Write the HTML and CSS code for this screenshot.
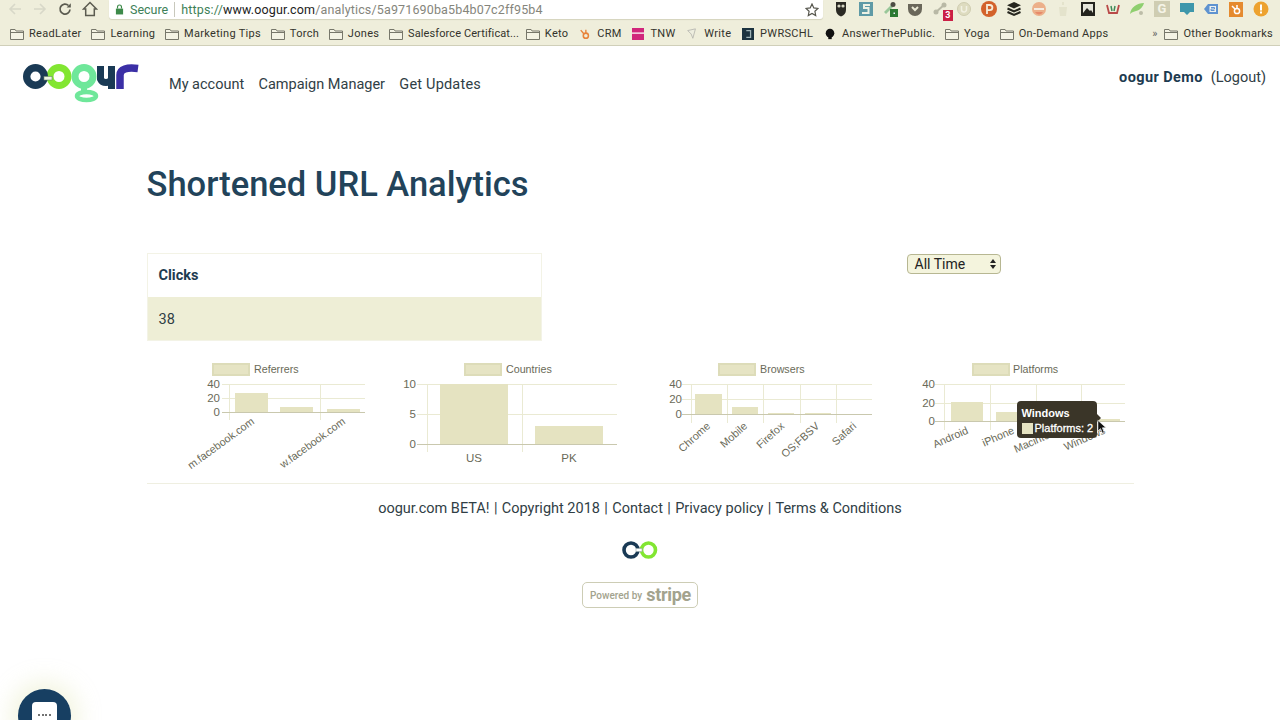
FILE: index.html
```html
<!DOCTYPE html>
<html lang="en">
<head>
<meta charset="utf-8">
<title>Shortened URL Analytics</title>
<link rel="stylesheet" href="styles.css">
</head>
<body>
<svg class="defs" width="0" height="0" aria-hidden="true">
  <defs>
    <symbol id="folder" viewBox="0 0 14 12">
      <path d="M.5 11.5V1.5h4.600l1 1.500h7.400v8.500z" fill="#f4f3e4" stroke="#77776a"/>
      <path d="M.5 4.500h13" stroke="#77776a" fill="none"/>
    </symbol>
  </defs>
</svg>

<header class="chrome">
  <div class="toolbar">
    <div class="nav-icons">
      <svg class="nav-icon" viewBox="0 0 16 16"><path d="M14 8H3M8 3 3 8l5 5" fill="none" stroke="#d8d8c8" stroke-width="1.600"/></svg>
      <svg class="nav-icon" viewBox="0 0 16 16"><path d="M2 8h11M8 3l5 5-5 5" fill="none" stroke="#d8d8c8" stroke-width="1.600"/></svg>
      <svg class="nav-icon" viewBox="0 0 16 16"><path d="M13 8.500A5 5 0 1 1 11.500 4.500" fill="none" stroke="#5b5b50" stroke-width="1.700"/><path d="M9.600 6.400h4.200V2.200z" fill="#5b5b50"/></svg>
      <svg class="nav-icon" viewBox="0 0 16 16"><path d="M8 1.500 1.500 8h2.200v6.500h8.600V8h2.200z" fill="none" stroke="#5b5b50" stroke-width="1.500"/></svg>
    </div>
    <div class="omnibox">
      <svg class="lock" viewBox="0 0 10 12"><path d="M1 5h8v6.500H1z" fill="#3d8a4a"/><path d="M2.800 5V3.200a2.200 2.200 0 0 1 4.400 0V5" fill="none" stroke="#3d8a4a" stroke-width="1.300"/></svg>
      <span class="secure">Secure</span>
      <span class="url"><span class="url-scheme">https://</span><span class="url-host">www.oogur.com</span><span class="url-path">/analytics/5a971690ba5b4b07c2ff95b4</span></span>
      <svg class="star" viewBox="0 0 14 14"><path d="m7 1 1.800 3.900 4.200.5-3.100 2.900.8 4.200L7 10.400l-3.700 2.100.8-4.200L1 5.400l4.200-.5z" fill="none" stroke="#55554c" stroke-width="1.200"/></svg>
    </div>
    <div class="extensions">
      <svg class="ext" viewBox="0 0 16 16"><path d="M3 1h10v8c0 3-2 5.500-5 6.500C5 14.500 3 12 3 9z" fill="#2b2a24"/><circle cx="6" cy="5" r="1.600" fill="#d8d8c4"/><circle cx="10" cy="5" r="1.600" fill="#d8d8c4"/></svg>
      <svg class="ext" viewBox="0 0 16 16"><rect x="1" y="1" width="14" height="14" fill="#5f9aa6"/><path d="M12 4H6v3h4.500v5H4" fill="none" stroke="#eef1e4" stroke-width="2"/></svg>
      <svg class="ext" viewBox="0 0 16 16"><path d="m2 11 7-7 2 2-7 7z" fill="#9ac79a"/><circle cx="11" cy="3.500" r="2.500" fill="#4d4d44"/><rect x="8" y="8" width="8" height="8" fill="#2c7a33"/><rect x="11.500" y="11.500" width="1.500" height="1.500" fill="#eef"/></svg>
      <svg class="ext" viewBox="0 0 16 16"><path d="M1 3h14v5a7 7 0 0 1-14 0z" fill="#6a675a"/><path d="m5 6 3 3 3-3" fill="none" stroke="#ecebd6" stroke-width="2"/></svg>
      <span class="ext ext-badged">
        <svg class="ext" viewBox="0 0 16 16"><circle cx="4" cy="11" r="2.500" fill="#b9b9a6"/><circle cx="12" cy="4" r="2.500" fill="#b9b9a6"/><path d="m4 11 8-7" stroke="#b9b9a6" stroke-width="2"/></svg>
        <span class="badge">3</span>
      </span>
      <svg class="ext" viewBox="0 0 16 16"><circle cx="8" cy="8" r="6.500" fill="#dedcc0" stroke="#cfcdb0"/><path d="M5.500 5v3.500a2.500 2.500 0 0 0 5 0V5" fill="none" stroke="#f2f1e2" stroke-width="1.500"/></svg>
      <svg class="ext" viewBox="0 0 16 16"><circle cx="8" cy="8" r="8" fill="#d3622b"/><path d="M6 13V4h2.800a2.500 2.500 0 0 1 0 5.200H6" fill="none" stroke="#f6ecd8" stroke-width="1.800"/></svg>
      <svg class="ext" viewBox="0 0 16 16"><path d="m8 1 7 3.200L8 7.400 1 4.200z" fill="#26261f"/><path d="m1.500 7.500 6.500 3 6.500-3M1.500 11l6.500 3 6.500-3" fill="none" stroke="#26261f" stroke-width="2"/></svg>
      <svg class="ext" viewBox="0 0 16 16"><circle cx="8" cy="8" r="7" fill="#ecb08a"/><rect x="3" y="7" width="10" height="2" fill="#f5ece0"/><path d="M4 11a4.500 4.500 0 0 0 8 0z" fill="#e78a6a"/></svg>
      <svg class="ext" viewBox="0 0 16 16"><path d="M4 6h8l-1 9H5zM7 1h2v3H7z" fill="#e4e3cc"/></svg>
      <svg class="ext" viewBox="0 0 16 16"><rect x="1" y="1" width="14" height="14" fill="#24241e"/><rect x="3" y="3" width="10" height="9" fill="#e6e6da"/><path d="m3 12 4-5 3 3 1-1 2 3z" fill="#24241e"/></svg>
      <svg class="ext" viewBox="0 0 16 16"><path d="m2 4 2 8h8l2-8" fill="none" stroke="#b94a48" stroke-width="1.800"/><path d="m6 5 1 5M10 5 9 10" stroke="#3f8a58" stroke-width="1.500"/></svg>
      <svg class="ext" viewBox="0 0 16 16"><path d="M1 13C2 6 8 2 15 2c-1 3-3 7-8 8-2 .5-4 1-6 3z" fill="#8fcf6f"/><circle cx="12" cy="12" r="2" fill="#bdbda8"/></svg>
      <span class="ext ext-g">G</span>
      <svg class="ext" viewBox="0 0 16 16"><path d="M1 2h14v9h-4l-3 3-3-3H1z" fill="#3e97ab"/></svg>
      <svg class="ext" viewBox="0 0 16 16"><path d="M1 8 5 3h10v10H5z" fill="#5f93d0"/><rect x="6.500" y="5" width="6.500" height="6" fill="#eef1ee"/><path d="M8 6.500h3.500v1.500H8v1.500h3.500" fill="none" stroke="#5f93d0"/></svg>
      <svg class="ext" viewBox="0 0 16 16"><rect x="1" y="1" width="14" height="15" fill="#e58a2e"/><circle cx="9" cy="10" r="2.600" fill="none" stroke="#fff" stroke-width="1.500"/><path d="M9 7.500V4M7 8 4 5" stroke="#fff" stroke-width="1.500"/></svg>
      <svg class="ext" viewBox="0 0 16 16"><circle cx="8" cy="8" r="7.500" fill="#eda22f"/><rect x="7" y="3.500" width="2" height="6" fill="#fff"/><rect x="7" y="10.500" width="2" height="2" fill="#fff"/></svg>
    </div>
  </div>

  <nav class="bookmarks">
    <a class="bm"><svg class="bm-icon"><use href="#folder"/></svg>ReadLater</a>
    <a class="bm"><svg class="bm-icon"><use href="#folder"/></svg>Learning</a>
    <a class="bm"><svg class="bm-icon"><use href="#folder"/></svg>Marketing Tips</a>
    <a class="bm"><svg class="bm-icon"><use href="#folder"/></svg>Torch</a>
    <a class="bm"><svg class="bm-icon"><use href="#folder"/></svg>Jones</a>
    <a class="bm bm-long"><svg class="bm-icon"><use href="#folder"/></svg>Salesforce Certificat...</a>
    <a class="bm"><svg class="bm-icon"><use href="#folder"/></svg>Keto</a>
    <a class="bm"><svg class="bm-icon" viewBox="0 0 14 14"><circle cx="8" cy="9" r="3" fill="none" stroke="#e8833a" stroke-width="1.800"/><path d="M8 6V2M5.800 7 2 2.500" stroke="#e8833a" stroke-width="1.600"/></svg>CRM</a>
    <a class="bm"><svg class="bm-icon" viewBox="0 0 14 14"><rect width="14" height="14" fill="#d1267c"/><path d="M0 6h14" stroke="#f3c6dc" stroke-width="2"/></svg>TNW</a>
    <a class="bm"><svg class="bm-icon" viewBox="0 0 14 14"><path d="m2 3 9-2-3 11-2-5z" fill="#eeeedf" stroke="#b5b5ae"/></svg>Write</a>
    <a class="bm"><svg class="bm-icon" viewBox="0 0 14 14"><rect width="14" height="14" fill="#1c3340"/><path d="M5 3h5v8H5" fill="none" stroke="#9fb4b8" stroke-width="1.500"/></svg>PWRSCHL</a>
    <a class="bm"><svg class="bm-icon" viewBox="0 0 14 14"><circle cx="7" cy="6" r="5" fill="#111"/><rect x="5" y="10" width="4" height="3" fill="#111"/></svg>AnswerThePublic.</a>
    <a class="bm"><svg class="bm-icon"><use href="#folder"/></svg>Yoga</a>
    <a class="bm"><svg class="bm-icon"><use href="#folder"/></svg>On-Demand Apps</a>
    <span class="bm-more">»</span>
    <a class="bm"><svg class="bm-icon"><use href="#folder"/></svg>Other Bookmarks</a>
  </nav>
</header>

<div class="site-header">
  <svg class="logo" viewBox="23 62 116 42" role="img" aria-label="oogur">
    <circle cx="59" cy="76.500" r="9" fill="none" stroke="#82e632" stroke-width="7"/>
    <circle cx="35.500" cy="76.500" r="8.800" fill="none" stroke="#1a3a55" stroke-width="7.400"/>
    <rect x="44" y="76.500" width="8" height="3.500" fill="#eef6e4" stroke="#6d8a70" stroke-width=".6"/>
    <circle cx="84" cy="76.500" r="9" fill="none" stroke="#6fe79a" stroke-width="7"/>
    <ellipse cx="86.500" cy="96" rx="9.500" ry="4" fill="none" stroke="#6fe79a" stroke-width="4.500"/>
    <path d="M84 86v5" stroke="#6fe79a" stroke-width="6"/>
    <path d="M100.500 66v13a6 6 0 0 0 11 0V66" fill="none" stroke="#1a3a55" stroke-width="7"/>
    <path d="M111.500 66v23" stroke="#1a3a55" stroke-width="7"/>
    <path d="M120 89V75c0-6 7-8 18-6.500" fill="none" stroke="#3b2fa6" stroke-width="7.500"/>
  </svg>
  <nav class="site-nav">
    <a>My account</a>
    <a>Campaign Manager</a>
    <a class="nav-last">Get Updates</a>
  </nav>
  <div class="user"><strong>oogur Demo</strong><span>(Logout)</span></div>
</div>

<main class="content">
  <h1>Shortened URL Analytics</h1>
  <div class="summary">
    <table class="clicks">
      <thead><tr><th>Clicks</th></tr></thead>
      <tbody><tr><td>38</td></tr></tbody>
    </table>
    <div class="range">
      <span>All Time</span>
      <svg class="range-arrows" viewBox="0 0 8 12"><path d="M4 1 7 5H1zM4 11 1 7h6z" fill="#222"/></svg>
    </div>
  </div>

  <div class="charts">
    <figure class="chart">
      <svg viewBox="128 360 253 116" width="253" height="116">
        <rect class="swatch" x="213" y="364" width="36" height="11"/>
        <text class="lbl" x="254" y="373">Referrers</text>
        <g class="grid"><path d="M222 384.500h143M222 398.500h143M229.500 384v36M320.500 384v36"/></g>
        <path class="axis" d="M222 412.500h143"/>
        <g class="bars"><rect x="235" y="393" width="33" height="19"/><rect x="280" y="407" width="33" height="5"/><rect x="327" y="409" width="33" height="3"/></g>
        <text class="tick end" x="220" y="388">40</text><text class="tick end" x="220" y="402">20</text><text class="tick end" x="220" y="416">0</text>
        <text class="tick rot end" transform="translate(255 423) rotate(-36)">m.facebook.com</text>
        <text class="tick rot end" transform="translate(346 423) rotate(-36)">w.facebook.com</text>
      </svg>
    </figure>
    <figure class="chart">
      <svg viewBox="381 360 253 116" width="253" height="116">
        <rect class="swatch" x="465" y="364" width="36" height="11"/>
        <text class="lbl" x="506" y="373">Countries</text>
        <g class="grid"><path d="M417 384.500h200M417 414.500h200M427.500 384v68M522.500 384v68"/></g>
        <path class="axis" d="M417 444.500h200"/>
        <g class="bars"><rect x="440" y="384" width="68" height="60"/><rect x="535" y="426" width="68" height="18"/></g>
        <text class="tick end" x="416" y="388">10</text><text class="tick end" x="416" y="418">5</text><text class="tick end" x="416" y="448">0</text>
        <text class="tick mid" x="474" y="462">US</text><text class="tick mid" x="569" y="462">PK</text>
      </svg>
    </figure>
    <figure class="chart">
      <svg viewBox="634 360 253 116" width="253" height="116">
        <rect class="swatch" x="719" y="364" width="36" height="11"/>
        <text class="lbl" x="760" y="373">Browsers</text>
        <g class="grid"><path d="M682 384.500h190M682 399.500h190M691.500 384v39M727.500 384v39M763.500 384v39M800.500 384v39M836.500 384v39"/></g>
        <path class="axis" d="M682 414.500h190"/>
        <g class="bars"><rect x="695" y="394" width="27" height="20"/><rect x="732" y="407" width="26" height="7"/><rect x="768" y="413" width="26" height="1"/><rect x="805" y="413" width="26" height="1"/></g>
        <text class="tick end" x="682" y="388">40</text><text class="tick end" x="682" y="403">20</text><text class="tick end" x="682" y="418">0</text>
        <text class="tick rot end" transform="translate(711 427) rotate(-42)">Chrome</text>
        <text class="tick rot end" transform="translate(748 427) rotate(-42)">Mobile</text>
        <text class="tick rot end" transform="translate(785 427) rotate(-42)">Firefox</text>
        <text class="tick rot end" transform="translate(820 427) rotate(-42)">OS;FBSV</text>
        <text class="tick rot end" transform="translate(857 427) rotate(-42)">Safari</text>
      </svg>
    </figure>
    <figure class="chart">
      <svg viewBox="887 360 253 116" width="253" height="116">
        <rect class="swatch" x="973" y="364" width="36" height="11"/>
        <text class="lbl" x="1013" y="373">Platforms</text>
        <g class="grid"><path d="M935 384.500h190M935 403.500h190M944.500 384v46M990.500 384v46M1036.500 384v46M1081.500 384v46"/></g>
        <path class="axis" d="M935 421.500h190"/>
        <g class="bars"><rect x="951" y="402" width="32" height="19"/><rect x="996" y="412" width="32" height="9"/><rect x="1087" y="419" width="33" height="2"/></g>
        <text class="tick end" x="935" y="388">40</text><text class="tick end" x="935" y="407">20</text><text class="tick end" x="935" y="425">0</text>
        <text class="tick rot end" transform="translate(969 433) rotate(-24)">Android</text>
        <text class="tick rot end" transform="translate(1015 433) rotate(-24)">iPhone</text>
        <text class="tick rot end" transform="translate(1061 433) rotate(-24)">Macintosh</text>
        <text class="tick rot end" transform="translate(1106 433) rotate(-24)">Windows</text>
      </svg>
      <div class="tooltip">
        <div class="tooltip-title">Windows</div>
        <div class="tooltip-row"><i class="tooltip-swatch"></i>Platforms: 2</div>
      </div>
      <svg class="cursor" viewBox="0 0 12 18"><path d="M1 1v13l3.200-3 2.300 5.500 2.200-1L6.500 10H11z" fill="#111" stroke="#fff" stroke-width=".8"/></svg>
    </figure>
  </div>

  <footer class="footer">
    <p class="footer-links">oogur.com BETA! <span class="sep">|</span> Copyright 2018 <span class="sep">|</span> Contact <span class="sep">|</span> Privacy policy <span class="sep">|</span> Terms &amp; Conditions</p>
    <svg class="mini-logo" viewBox="0 0 36 18" role="img" aria-label="oogur">
      <circle cx="26.500" cy="9" r="7" fill="none" stroke="#82e632" stroke-width="3.600"/>
      <circle cx="9" cy="9" r="7" fill="none" stroke="#1a3a55" stroke-width="3.600"/>
      <rect x="14" y="7.500" width="6" height="3" fill="#fff" stroke="#9aa" stroke-width=".6"/>
    </svg>
    <div class="stripe"><span class="stripe-pre">Powered by</span><span class="stripe-name">stripe</span></div>
  </footer>
</main>

<div class="chat"><div class="chat-bubble"><i></i><i></i><i></i><i></i></div></div>
</body>
</html>
```

FILE: styles.css
```css
* { box-sizing: border-box; }
html, body { height: 100%; }
body {
  margin: 0;
  background: #fff;
  color: #303e45;
  font-family: Roboto, "Liberation Sans", sans-serif;
  font-size: 14.5px;
  overflow: hidden;
  position: relative;
}
.defs { position: absolute; }

/* browser chrome */
.chrome { background: #efeedb; }
.toolbar { display: flex; height: 22px; padding-left: 7px; }
.nav-icons { display: flex; gap: 9px; padding-top: 1px; width: 102px; }
.nav-icon { width: 16px; height: 16px; }
.omnibox {
  display: flex;
  align-items: center;
  width: 714px;
  height: 19px;
  background: #fff;
  border-radius: 0 0 3px 3px;
  box-shadow: 0 1px 1px #d4d3bd;
  padding: 0 4px 0 6px;
  font-size: 12.5px;
}
.lock { width: 9px; height: 11px; margin-right: 6px; }
.secure { color: #3d7f57; padding-right: 6px; border-right: 1px solid #c8c8bc; line-height: 15px; }
.url { margin-left: 6px; flex: 1; letter-spacing: .15px; white-space: nowrap; }
.url-scheme { color: #3d7f57; }
.url-host { color: #222; }
.url-path { color: #85857c; }
.star { width: 14px; height: 14px; }
.extensions { display: flex; gap: 8.700px; padding: 1px 0 0 10px; }
.ext { display: block; width: 16px; height: 16px; flex: none; }
.ext-badged { position: relative; }
.badge {
  position: absolute;
  right: -5px;
  bottom: -4px;
  width: 10px;
  height: 11px;
  background: #cb1f45;
  color: #fff;
  font-size: 9px;
  font-weight: 700;
  line-height: 11px;
  text-align: center;
}
.ext-g {
  background: #cfcdb2;
  color: #f5f4e8;
  font-size: 13px;
  font-weight: 700;
  line-height: 16px;
  text-align: center;
}
.bookmarks {
  display: flex;
  align-items: center;
  height: 24px;
  padding: 0 8px 0 10px;
  gap: 9.800px;
  border-bottom: 1px solid #d0cfb9;
  color: #33332c;
  font-size: 11px;
  letter-spacing: .3px;
  white-space: nowrap;
}
.bm { display: flex; align-items: center; gap: 5px; }
.bm-long { letter-spacing: .1px; margin-right: -3px; }
.bm-icon { width: 14px; height: 12px; flex: none; }
.bm-more { margin-left: 34px; margin-right: -3px; color: #666; }

/* site header */
.site-header {
  display: flex;
  align-items: flex-start;
  height: 60px;
  padding: 16px 14px 0 23px;
}
.logo { width: 116px; height: 42px; flex: none; }
.site-nav { display: flex; gap: 14.300px; margin-left: 30px; padding-top: 14px; }
.nav-last { letter-spacing: .2px; }
.user { margin-left: auto; display: flex; gap: 8px; padding-top: 7px; }
.user strong { color: #1d3b50; font-weight: 700; letter-spacing: .4px; }

/* content */
.content { width: 987px; margin: 0 auto; }
h1 {
  margin: 53px 0 0;
  color: #22435a;
  font-size: 34.500px;
  font-weight: 500;
  line-height: 50px;
}
.summary { display: flex; align-items: flex-start; margin-top: 44px; }
.clicks {
  width: 395px;
  height: 88px;
  border-collapse: collapse;
  border: 1px solid #f3f3e6;
}
.clicks th, .clicks td { padding: 0 11px; text-align: left; }
.clicks th { height: 43px; color: #1d3b50; font-weight: 700; }
.clicks td { height: 44px; padding-top: 2px; background: #eeeed6; }
.range {
  display: flex;
  align-items: center;
  justify-content: space-between;
  width: 94px;
  height: 20px;
  margin: 1px 0 0 365px;
  padding: 0 3px 0 7px;
  background: #f4f4dd;
  border: 1px solid #b7b792;
  border-radius: 4px;
  color: #222;
  font-size: 14px;
}
.range-arrows { width: 8px; height: 12px; }

/* charts */
.charts {
  display: flex;
  width: 1012px;
  margin: 19px 0 0 -19px;
}
.chart { position: relative; width: 253px; height: 116px; margin: 0; }
.chart > svg:first-child { display: block; }
.swatch { fill: #e6e4c4; stroke: #dddcb9; stroke-width: 2; }
.lbl, .tick { font-family: "Liberation Sans", Arial, sans-serif; font-size: 10.700px; fill: #6a6a58; }
.tick { font-size: 11.500px; }
.rot { font-size: 10.800px; }
.end { text-anchor: end; }
.mid { text-anchor: middle; }
.grid path { fill: none; stroke: #eaead3; stroke-width: 1; }
.axis { fill: none; stroke: #c9c8ae; stroke-width: 1; }
.bars rect { fill: #e5e3c1; }
.tooltip {
  position: absolute;
  left: 130px;
  top: 41px;
  width: 80px;
  height: 37px;
  padding: 5px 5px;
  background: #3a3528;
  border-radius: 4px;
  color: #fff;
  font-family: "Liberation Sans", Arial, sans-serif;
  font-size: 11px;
  font-weight: 700;
  line-height: 15px;
}
.tooltip::after {
  content: "";
  position: absolute;
  right: -4px;
  top: 13px;
  border: 4px solid transparent;
  border-left-color: #3a3528;
  border-right-width: 0;
}
.tooltip-row { display: flex; align-items: center; gap: 2px; white-space: nowrap; font-weight: 400; -webkit-text-stroke: .3px #fff; }
.tooltip-swatch { width: 11px; height: 11px; background: #e5e3c1; flex: none; }
.cursor { position: absolute; left: 210px; top: 59px; width: 10px; height: 16px; }

/* footer */
.footer {
  display: flex;
  flex-direction: column;
  align-items: center;
  margin-top: 7px;
  border-top: 1px solid #efefe1;
  padding-top: 16px;
}
.footer-links { margin: 0; line-height: 18px; }
.sep { margin: 0 .75px; }
.mini-logo { width: 36px; height: 18px; margin-top: 23px; }
.stripe {
  display: flex;
  align-items: center;
  justify-content: space-between;
  width: 116px;
  height: 26px;
  margin-top: 23px;
  padding: 0 6px 0 7px;
  border: 1px solid #cdcdb5;
  border-radius: 5px;
  color: #a3a38e;
}
.stripe-pre { font-size: 10px; font-weight: 500; }
.stripe-name { font-size: 18px; font-weight: 700; line-height: 22px; letter-spacing: -.3px; }

/* chat launcher */
.chat {
  position: absolute;
  left: 18px;
  top: 689px;
  width: 53px;
  height: 53px;
  background: #173f62;
  border-radius: 50%;
  box-shadow: 0 0 22px 8px rgba(220, 225, 170, .35);
}
.chat-bubble {
  display: flex;
  justify-content: center;
  gap: 1.500px;
  width: 25px;
  height: 30px;
  margin: 13px 0 0 14px;
  padding-top: 12px;
  background: #fff;
  border-radius: 4px;
}
.chat-bubble i { width: 2px; height: 2px; background: #444; border-radius: 50%; }
```
